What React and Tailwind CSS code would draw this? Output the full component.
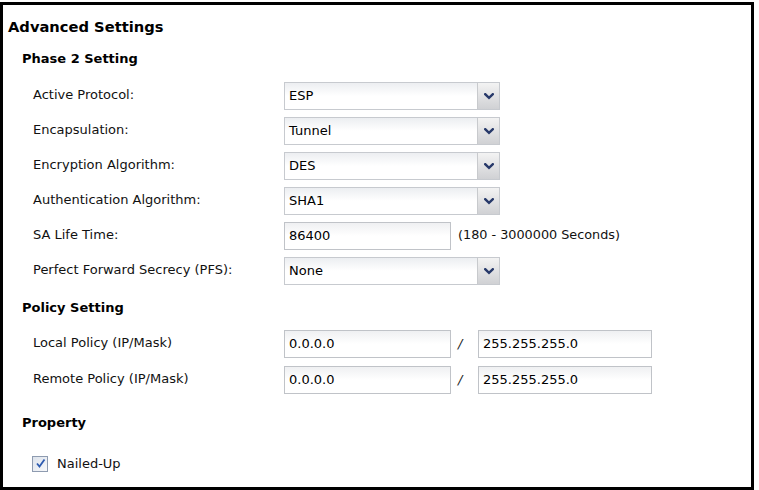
import React from 'react';

const font = { fontFamily: '"DejaVu Sans", Verdana, sans-serif' };

const Chevron = () => (
  <svg width="10" height="7" viewBox="0 0 10 7">
    <path d="M1.2 1.2 L5 4.8 L8.8 1.2" fill="none" stroke="#27396a" strokeWidth="2.4" strokeLinecap="square" />
  </svg>
);

const Select = ({ value }) => (
  <div className="flex h-[28px] w-[216px] border border-[#c7cacf] bg-gradient-to-b from-[#eceef1] via-white to-white">
    <div className="flex flex-1 items-center pl-[4px] text-[13px] text-black">{value}</div>
    <div className="flex w-[22px] items-center justify-center border-l border-[#c8cacd] bg-gradient-to-b from-[#f3f3f3] to-[#d0d1d4]">
      <Chevron />
    </div>
  </div>
);

const Input = ({ value, width = 'w-[167px]' }) => (
  <div className={`flex h-[28px] ${width} items-center border border-[#c0c3c8] bg-gradient-to-b from-[#eff0f2] via-white to-white pl-[4px] text-[13px] text-black`}>
    {value}
  </div>
);

const Row = ({ label, children }) => (
  <div className="flex h-[28px] items-center">
    <div className="w-[251px] pb-[3px] text-[13px] text-[#111]">{label}</div>
    {children}
  </div>
);

const Header = ({ children, className = '' }) => (
  <div className={`pl-[14px] text-[13px] font-bold leading-[16px] text-black ${className}`}>{children}</div>
);

export default function App() {
  return (
    <div className="h-[490px] w-[759px] bg-white pt-[2px]" style={font}>
      <div className="h-[488px] w-[754px] border-[3px] border-black pl-[5px] pt-[13px]">
        <div className="text-[14.7px] font-bold leading-[18px] text-black">Advanced Settings</div>

        <Header className="mt-[15px]">Phase 2 Setting</Header>
        <div className="mt-[15px] flex flex-col gap-[7px] pl-[25px]">
          <Row label="Active Protocol:"><Select value="ESP" /></Row>
          <Row label="Encapsulation:"><Select value="Tunnel" /></Row>
          <Row label="Encryption Algorithm:"><Select value="DES" /></Row>
          <Row label="Authentication Algorithm:"><Select value="SHA1" /></Row>
          <Row label="SA Life Time:">
            <Input value="86400" />
            <span className="ml-[7px] pb-[2px] text-[12.8px] text-[#111]">(180 - 3000000 Seconds)</span>
          </Row>
          <Row label="Perfect Forward Secrecy (PFS):"><Select value="None" /></Row>
        </div>

        <Header className="mt-[15px]">Policy Setting</Header>
        <div className="mt-[14px] flex flex-col gap-[8px] pl-[25px]">
          <Row label="Local Policy (IP/Mask)">
            <Input value="0.0.0.0" />
            <span className="w-[27px] pl-[7px] text-[13px] italic text-[#222]">/</span>
            <Input value="255.255.255.0" width="w-[174px]" />
          </Row>
          <Row label="Remote Policy (IP/Mask)">
            <Input value="0.0.0.0" />
            <span className="w-[27px] pl-[7px] text-[13px] italic text-[#222]">/</span>
            <Input value="255.255.255.0" width="w-[174px]" />
          </Row>
        </div>

        <Header className="mt-[21px]">Property</Header>
        <div className="mt-[23px] flex items-center pl-[24px]">
          <div className="flex h-[16px] w-[16px] items-center justify-center border border-[#8e9bb0] bg-gradient-to-br from-[#dde3ec] to-[#f7f8fa]">
            <svg width="11" height="11" viewBox="0 0 11 11">
              <path d="M2 5.5 L4.5 8.5 L9.5 1.5" fill="none" stroke="#2d5bb0" strokeWidth="1.8" />
            </svg>
          </div>
          <span className="ml-[9px] text-[13px] text-[#111]">Nailed-Up</span>
        </div>
      </div>
    </div>
  );
}
